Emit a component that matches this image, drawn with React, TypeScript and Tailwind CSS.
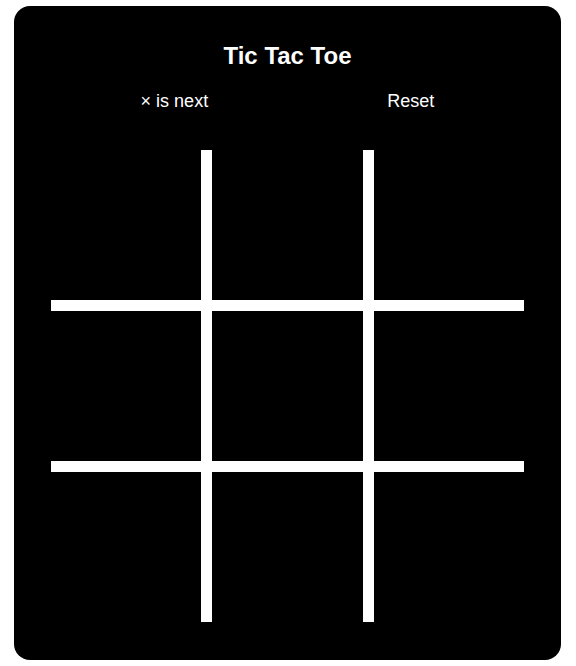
import React, { useState } from "react";

export default function App() {
  const [cells, setCells] = useState<(string | null)[]>(Array(9).fill(null));
  const [xNext, setXNext] = useState(true);

  const play = (i: number) => {
    if (cells[i]) return;
    const next = cells.slice();
    next[i] = xNext ? "×" : "○";
    setCells(next);
    setXNext(!xNext);
  };

  return (
    <div
      className="min-h-[666px] w-[576px] bg-white pt-[6px] pl-[14px]"
      style={{ fontFamily: '"Liberation Sans", Arial, sans-serif' }}
    >
      <div className="flex h-[654px] w-[547px] flex-col items-center rounded-2xl bg-black pt-[36px] text-white">
        <h1 className="text-[24px] font-bold leading-[28px]">Tic Tac Toe</h1>
        <div className="mt-[19px] flex w-[473px] justify-around text-[18px] leading-[24px]">
          <span>{xNext ? "×" : "○"} is next</span>
          <button
            className="cursor-pointer text-[18px] leading-[24px] text-white"
            onClick={() => {
              setCells(Array(9).fill(null));
              setXNext(true);
            }}
          >
            Reset
          </button>
        </div>
        <div className="mt-[37px] grid grid-cols-[150px_151px_150px] grid-rows-[150px_150px_150px] gap-[11px] bg-white">
          {cells.map((c, i) => (
            <button
              key={i}
              onClick={() => play(i)}
              className="flex items-center justify-center bg-black text-[80px] text-white"
            >
              {c}
            </button>
          ))}
        </div>
      </div>
    </div>
  );
}
